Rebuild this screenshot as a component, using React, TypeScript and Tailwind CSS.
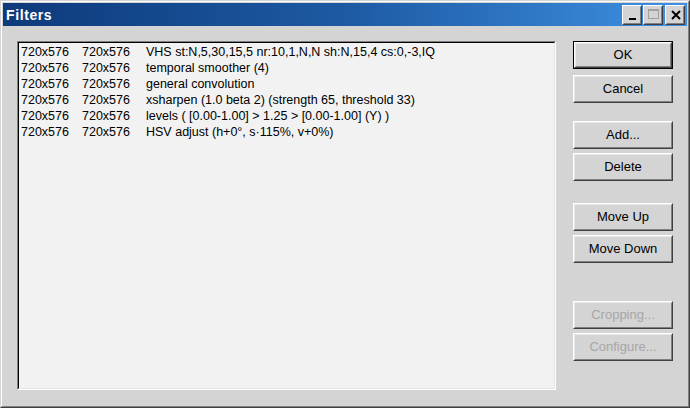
const ROWS: [string, string, string][] = [
  ['720x576', '720x576', 'VHS st:N,5,30,15,5 nr:10,1,N,N sh:N,15,4 cs:0,-3,IQ'],
  ['720x576', '720x576', 'temporal smoother (4)'],
  ['720x576', '720x576', 'general convolution'],
  ['720x576', '720x576', 'xsharpen (1.0 beta 2) (strength 65, threshold 33)'],
  ['720x576', '720x576', 'levels ( [0.00-1.00] > 1.25 > [0.00-1.00] (Y) )'],
  ['720x576', '720x576', 'HSV adjust (h+0°, s·115%, v+0%)'],
]

function Btn({ label, def, disabled }: { label: string; def?: boolean; disabled?: boolean }) {
  const inner = (
    <div className="h-full border border-t-white border-l-white border-b-[#404040] border-r-[#404040]">
      <div className="h-full flex items-center justify-center border border-t-[#e8e8e8] border-l-[#e8e8e8] border-b-[#808080] border-r-[#808080]">
        <span className={`text-[13px] ${disabled ? 'text-[#a6a6a6]' : 'text-black'}`}>{label}</span>
      </div>
    </div>
  )
  return (
    <div className={`h-[28px] w-[100px] ${def ? 'border border-black' : ''}`}>{inner}</div>
  )
}

function TitleBtn({ children }: { children: React.ReactNode }) {
  return (
    <div className="w-[20px] h-[20px] bg-[#d4d4d4] border border-t-white border-l-white border-b-[#404040] border-r-[#404040]">
      <div className="h-full relative border border-transparent border-b-[#808080] border-r-[#808080]">{children}</div>
    </div>
  )
}

export default function App() {
  return (
    <div
      className="w-[690px] h-[408px] bg-[#d4d4d4] border border-t-[#d4d4d4] border-l-[#d4d4d4] border-b-[#404040] border-r-[#404040] text-[12.5px] leading-[16px]"
      style={{ fontFamily: '"Liberation Sans", Arial, sans-serif' }}
    >
      <div className="h-full border border-t-white border-l-white border-b-[#808080] border-r-[#808080] p-px flex flex-col">
        {/* title bar */}
        <div className="h-[23px] flex items-center justify-between bg-gradient-to-r from-[#0e3a7b] via-[#1d5aa3] to-[#3f91e3] pl-[3px] pr-[2px]">
          <span className="text-white font-bold text-[14px] tracking-[0.6px]">Filters</span>
          <div className="flex items-center">
            <TitleBtn>
              <div className="absolute left-[5px] bottom-[3px] w-[7px] h-[2px] bg-black" />
            </TitleBtn>
            <div className="ml-px">
              <TitleBtn>
                <div className="absolute left-[3px] top-[2px] w-[11px] h-[10px] border border-[#a0a0a0] border-t-2" />
              </TitleBtn>
            </div>
            <div className="ml-[2px]">
              <TitleBtn>
                <svg className="absolute left-[3px] top-[2px]" width="12" height="12" viewBox="0 0 12 12">
                  <path d="M2 2 L10 10 M10 2 L2 10" stroke="black" strokeWidth="2" />
                </svg>
              </TitleBtn>
            </div>
          </div>
        </div>

        {/* body */}
        <div className="flex-1 flex pl-[14px] pr-[14px] pt-[15px] pb-[15px] gap-[17px]">
          <div className="flex-1 border border-t-[#808080] border-l-[#808080] border-b-white border-r-white">
            <div className="h-full bg-[#f2f2f2] border border-t-black border-l-black border-b-[#e4e4e4] border-r-[#e4e4e4] pl-[2px] pt-px">
              {ROWS.map((r, i) => (
                <div key={i} className="flex h-[16px] items-center whitespace-nowrap text-black">
                  <span className="w-[61px]">{r[0]}</span>
                  <span className="w-[64px]">{r[1]}</span>
                  <span>{r[2]}</span>
                </div>
              ))}
            </div>
          </div>
          <div className="w-[100px] flex flex-col">
            <Btn label="OK" def />
            <div className="mt-[6px]"><Btn label="Cancel" /></div>
            <div className="mt-[18px]"><Btn label="Add..." /></div>
            <div className="mt-[4px]"><Btn label="Delete" /></div>
            <div className="mt-[22px]"><Btn label="Move Up" /></div>
            <div className="mt-[4px]"><Btn label="Move Down" /></div>
            <div className="mt-[38px]"><Btn label="Cropping..." disabled /></div>
            <div className="mt-[4px]"><Btn label="Configure..." disabled /></div>
          </div>
        </div>
      </div>
    </div>
  )
}
